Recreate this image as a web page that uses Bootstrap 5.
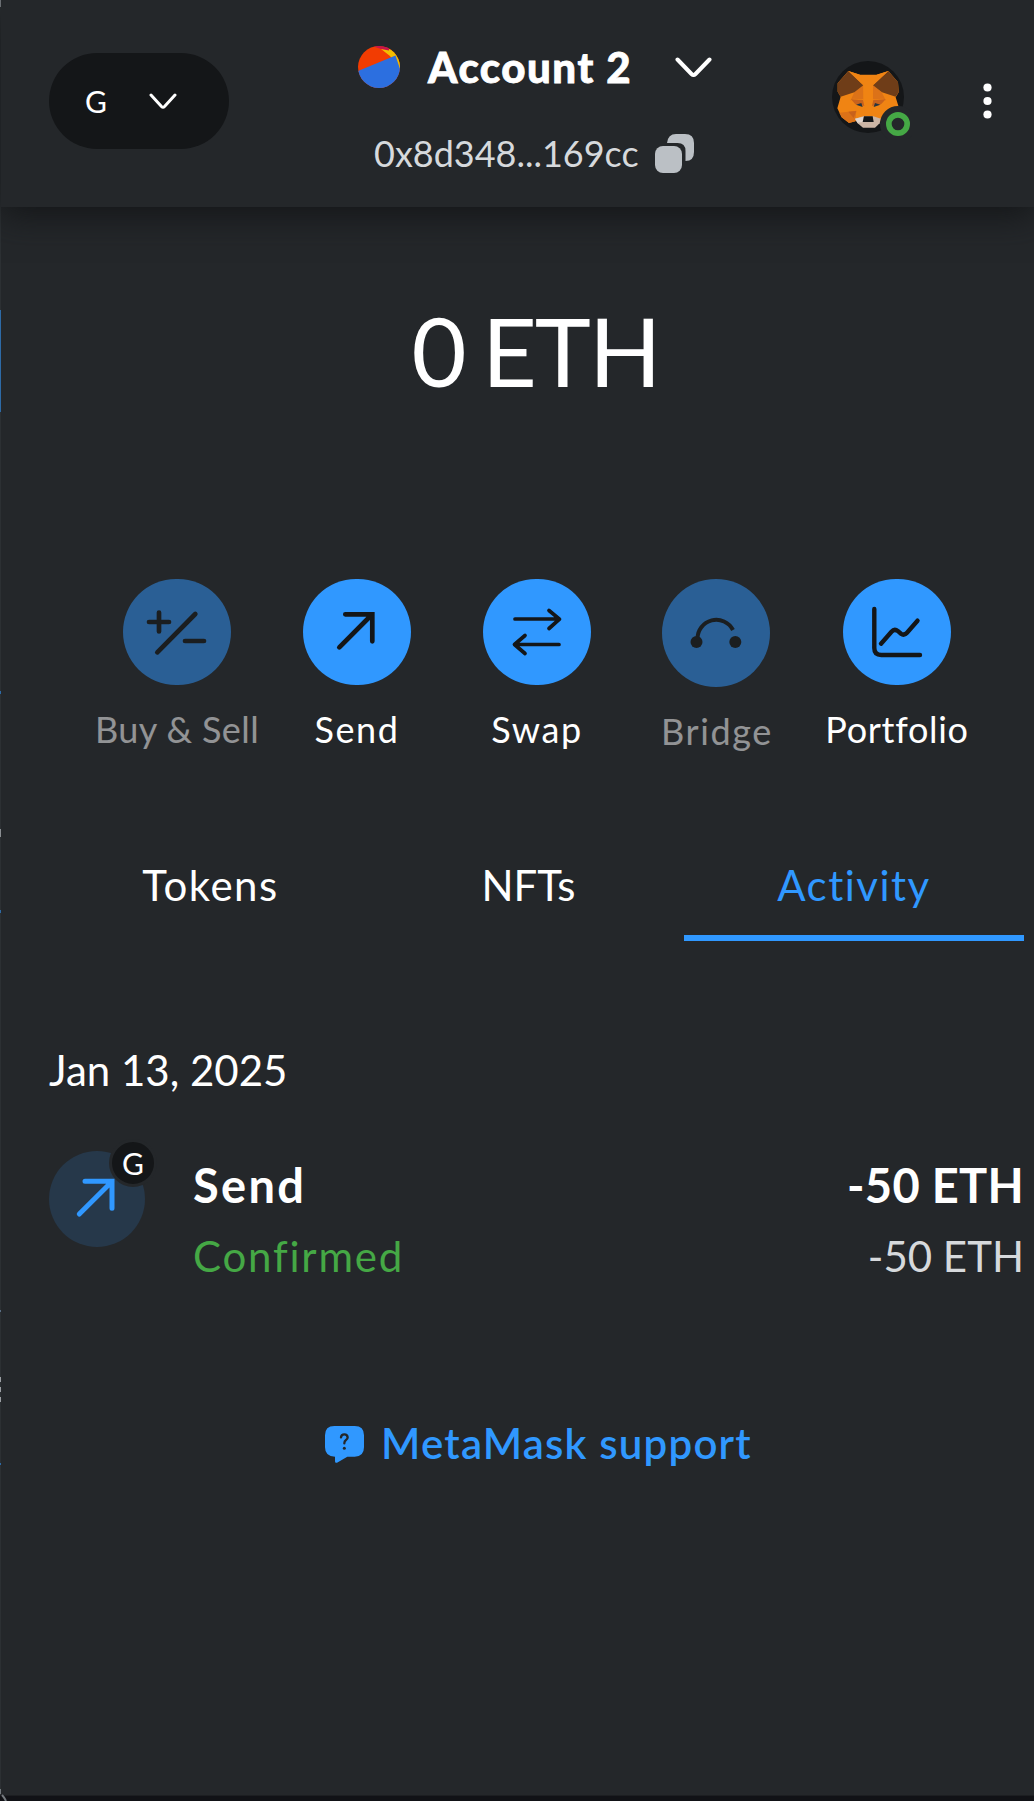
<!DOCTYPE html>
<html lang="en" data-bs-theme="dark">
<head>
<meta charset="utf-8">
<meta name="viewport" content="width=device-width, initial-scale=1">
<title>Wallet</title>
<link href="https://cdn.jsdelivr.net/npm/bootstrap@5.3.0/dist/css/bootstrap.min.css" rel="stylesheet">
<style>
body{background:#24272a;color:#fff;font-family:Lato,"Open Sans",sans-serif;height:1801px;overflow:hidden;position:relative}
svg{display:block;flex:none}
.tx{white-space:nowrap;line-height:1;font-variant-ligatures:none}
.wallet{border-left:1px solid #2c3033;height:1795px}
.topbar{height:207px;padding:46px 0 0 48px;background:#24272a;box-shadow:0 8px 32px #141618}
.net-pill{width:180px;height:96px;border-radius:48px;background:#141618;margin-top:7px;padding-left:36px;gap:42px}
.g-letter{font-size:30px}
.acct{width:603px;padding-left:9px}
.acct-name{font-size:42px;font-weight:900;width:203px;margin:-1px 44px 0 28px;letter-spacing:1.5px;-webkit-text-stroke:.8px #fff}
.acct-line{margin-top:46px}
.acct-addr{font-size:36px;color:#d6d9dc;width:265px;margin:-2px 16px 0 -2px}
.fox{margin-top:15px}
.more-dots{margin:37px 0 0 71px}
.balance{font-size:95px;height:104px;margin-top:96px;padding-left:36px;letter-spacing:-2px;word-spacing:-5px}
.actions{width:900px;margin:172px 0 0 86px}
.act{width:180px}
.disc{width:108px;height:106px;border-radius:54px;background:#3098ff;color:#141618}
.disc-tall{height:108px;margin-left:-2px}
.act.off{opacity:.5}
.act-label{font-size:36px;margin-top:26px;letter-spacing:1.6px}
.tabs-row{padding:0 10px 0 47px;margin-top:100px;font-size:42px}
.tab-item{height:92px;padding-top:15px;letter-spacing:1.5px}
.tab-a{width:325px}.tab-b{width:311px;letter-spacing:0}.tab-c{width:340px}
.tab-item.on{color:#3098ff;border-bottom:6px solid #3098ff}
.day{margin-top:98px}
.date{font-size:42px;margin-left:48px}
.tx-row{margin:49px 10px 0 48px}
.tx-icon{position:relative;width:96px;height:96px;border-radius:50%;background:#26384a;color:#3098ff}
.tx-badge{position:absolute;left:60px;top:-12px;width:48px;height:48px;border-radius:50%;background:#141618;border:3px solid #24272a;color:#fff}
.tx-col{gap:26px;padding-top:11px}
.tx-main{margin-left:48px}
.big{font-size:47px;font-weight:700}
.sub{font-size:42px}
.ok-text{color:#45a845;letter-spacing:1.8px}
.soft{color:#d6d9dc}
.support{font-size:42px;color:#3098ff;font-weight:600;margin-top:145px;padding-left:42px;gap:17px;letter-spacing:1.2px}
.support svg{margin-top:2px}
.edge{position:absolute;left:0;width:1px}
.bottom-bar{height:6px;background:#111216;border-top:1px solid #1c1e21}
.corner{position:absolute;left:0;bottom:0}
</style>
<script src="https://cdn.jsdelivr.net/npm/bootstrap@5.3.0/dist/js/bootstrap.bundle.min.js"></script>
</head>
<body>
<main class="wallet">
<header class="topbar d-flex align-items-start">
  <div class="net-pill d-flex align-items-center">
    <span class="tx g-letter">G</span>
    <svg width="28" height="17" viewBox="0 0 28 17" fill="none" stroke="#fff" stroke-width="3" stroke-linecap="round" stroke-linejoin="round"><path d="M2 2l10.500 11.500q1.500 1.500 3 0L26 2"/></svg>
  </div>
  <div class="acct d-flex flex-column align-items-center">
    <div class="d-flex align-items-center">
      <svg width="42" height="42" viewBox="0 0 42 42"><defs><clipPath id="av"><circle cx="21" cy="21" r="21"/></clipPath></defs><g clip-path="url(#av)"><path fill="#f23c02" d="M0 0h42v42H0z"/><path fill="#f3be00" d="M23 3l8 0 11 4v16l-10-13z"/><path fill="#c8144a" d="M14 0h17l0 4.500-8-1.500z"/><path fill="#2c6fe0" d="M0 25L37.500 9.500l5 15V42H0z"/></g></svg>
      <span class="tx acct-name">Account 2</span>
      <svg width="37" height="21" viewBox="0 0 37 21" fill="none" stroke="#fff" stroke-width="4" stroke-linecap="round" stroke-linejoin="round"><path d="M2.500 2.500l14 14.500q2 2 4 0l14-14.500"/></svg>
    </div>
    <div class="acct-line d-flex align-items-center">
      <span class="tx acct-addr">0x8d348...169cc</span>
      <svg width="39" height="39" viewBox="0 0 39 39" fill="#bbc0c5"><rect x="0" y="12" width="27" height="27" rx="8"/><path d="M12 9q1-9 9-9h9q9 0 9 9v9q0 9-8.500 9V17q0-8-8-8z"/></svg>
    </div>
  </div>
  <div class="fox">
    <svg width="80" height="78" viewBox="96 93 240 234">
      <circle cx="204" cy="201" r="108" fill="#141618"/>
      <path fill="#f08413" d="M145 123L180 134H230L265 123 294 157 296 187 287 202 297 234 289 258 262 279 243 275 238 270H170L166 274 147 279 125 262 112 235 122 200 113 185V160z"/>
      <path fill="#dc7218" d="M163 187L190 166 190 208 160 206 151 212zM245 187L219 166 219 208 249 206 258 212zM145 245L169 242 166 274 147 279 125 262 118 248z"/>
      <path fill="#6f3d18" d="M145 123L190 166 163 187 122 200 113 185V160zM265 123L219 166 246 187 287 200 296 187 294 157z"/>
      <path fill="#f08413" d="M145 123L180 134 190 166zM265 123L230 134 219 166zM190 166L204 150 219 166 215 258H193z"/>
      <path fill="#c8621c" d="M153 208L189 210 193 228 166 223zM257 208L220 210 216 228 243 223zM145 245L169 243 161 264z"/>
      <path fill="#243441" d="M168 224L184 219 188 231zM241 224L225 219 221 231z"/>
      <path fill="#cbb5a5" d="M165 266L190 259H220L243 266 239 280 225 293H189L173 280z"/><path fill="#e2d6ce" d="M165 266L190 260V276L172 278z"/>
      <path fill="#141618" d="M192 259H218L221 276H188z"/>
      <circle cx="294" cy="282" r="54" fill="#24272a"/><circle cx="294" cy="282" r="27.500" fill="none" stroke="#45a845" stroke-width="17"/>
    </svg>
  </div>
  <svg class="more-dots" width="9" height="36" viewBox="0 0 9 36" fill="#fff"><circle cx="4.500" cy="4.500" r="4.100"/><circle cx="4.500" cy="18" r="4.100"/><circle cx="4.500" cy="31.500" r="4.100"/></svg>
</header>
<section class="balance d-flex justify-content-center"><span class="tx">0 ETH</span></section>
<section class="actions d-flex">
  <div class="act off d-flex flex-column align-items-center"><div class="disc"><svg width="108" height="106" fill="none" stroke="currentColor" stroke-width="4.700" stroke-linecap="round"><path d="M26 43h20M36 33.500v19M72.300 35l-38 38.300M62 62h19"/></svg></div><span class="tx act-label" style="letter-spacing:.4px">Buy &amp; Sell</span></div>
  <div class="act d-flex flex-column align-items-center"><div class="disc"><svg width="108" height="106" fill="none" stroke="currentColor" stroke-width="4.700" stroke-linecap="round"><path d="M36.300 68.300L69 35.500M42.300 35.300h27v27"/></svg></div><span class="tx act-label">Send</span></div>
  <div class="act d-flex flex-column align-items-center"><div class="disc"><svg width="108" height="106" fill="none" stroke="currentColor" stroke-width="3.700" stroke-linecap="round" stroke-linejoin="round"><path d="M32 40h44M66 31.500l10.500 8.700L66 49.500M76 65.500H32M42 56.500l-10.500 9L42 74.500"/></svg></div><span class="tx act-label">Swap</span></div>
  <div class="act off d-flex flex-column align-items-center"><div class="disc disc-tall"><svg width="108" height="106" fill="none" stroke="currentColor" stroke-width="4"><path d="M35.500 60A18.800 18.800 0 0 1 71 51"/><circle cx="34.500" cy="63" r="6" fill="currentColor" stroke="none"/><circle cx="73.300" cy="63" r="6" fill="currentColor" stroke="none"/></svg></div><span class="tx act-label">Bridge</span></div>
  <div class="act d-flex flex-column align-items-center"><div class="disc"><svg width="108" height="106" fill="none" stroke="currentColor" stroke-width="4.400" stroke-linecap="round"><path d="M31.300 30v39q0 7 7 7H77M38 64.700l10.500-12q3-3.500 6.500-.5l3 2.500q3 2.300 6-1l10.500-12"/></svg></div><span class="tx act-label" style="letter-spacing:.7px">Portfolio</span></div>
</section>
<nav class="tabs-row d-flex text-center">
  <div class="tab-item tab-a tx">Tokens</div>
  <div class="tab-item tab-b tx">NFTs</div>
  <div class="tab-item tab-c tx on">Activity</div>
</nav>
<section class="day">
  <div class="date"><span class="tx">Jan 13, 2025</span></div>
  <div class="tx-row d-flex">
    <div class="tx-icon"><svg width="96" height="96" fill="none" stroke="currentColor" stroke-width="5" stroke-linecap="round"><path d="M30.300 63L63 30.500M36 30.300h27v27"/></svg><div class="tx-badge d-flex align-items-center justify-content-center"><span class="tx g-letter">G</span></div></div>
    <div class="tx-col tx-main d-flex flex-column"><span class="tx big" style="letter-spacing:2.3px">Send</span><span class="tx sub ok-text">Confirmed</span></div>
    <div class="tx-col d-flex flex-column align-items-end ms-auto"><span class="tx big" style="letter-spacing:.3px">-50 ETH</span><span class="tx sub soft">-50 ETH</span></div>
  </div>
</section>
<div class="support d-flex justify-content-center align-items-center">
  <svg width="39" height="37" viewBox="75 79 117 111"><path fill="#3098ff" d="M103 79h61q28 0 28 28v36q0 28-28 28h-22l-31 18q-6 2-6-4v-14q-30 0-30-28v-36q0-28 28-28z"/><path d="M123 113q1-9 10-9t10 9q0 5-5 8t-5 10" fill="none" stroke="#24272a" stroke-width="7" stroke-linecap="round"/><circle cx="133" cy="146" r="4.500" fill="#24272a"/></svg>
  <span class="tx">MetaMask support</span>
</div>
</main>
<div class="bottom-bar"></div>
<i class="edge" style="top:0;height:7px;background:#6a6e72"></i>
<i class="edge" style="top:310px;height:102px;background:#2d6aa6"></i>
<i class="edge" style="top:691px;height:3px;background:#2d6aa6"></i>
<i class="edge" style="top:829px;height:8px;background:#8a8e92"></i>
<i class="edge" style="top:910px;height:3px;background:#2d6aa6"></i>
<i class="edge" style="top:1310px;height:2px;background:#5a6f86"></i>
<i class="edge" style="top:1377px;height:5px;background:#9a9ea2"></i>
<i class="edge" style="top:1387px;height:5px;background:#9a9ea2"></i>
<i class="edge" style="top:1397px;height:5px;background:#9a9ea2"></i>
<i class="edge" style="top:1463px;height:2px;background:#2d6aa6"></i>
<svg class="corner" width="8" height="14" viewBox="0 0 8 14" fill="none" stroke="#74797e" stroke-width="2"><path d="M0 2v5M2 8q2 2 4 6"/></svg>
</body>
</html>
